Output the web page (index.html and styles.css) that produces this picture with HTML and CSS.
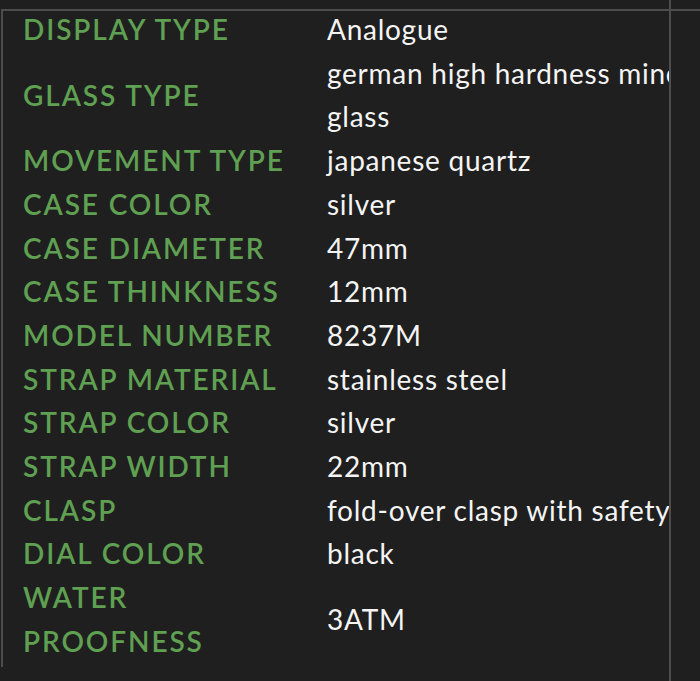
FILE: index.html
```html
<!DOCTYPE html>
<html>
<head>
<meta charset="utf-8">
<link rel="stylesheet" href="styles.css">
</head>
<body>
<div class="page">
  <div class="main">
    <div class="frame">
      <div class="specs">
        <div class="label">DISPLAY TYPE</div><div class="value">Analogue</div>
        <div class="label">GLASS TYPE</div><div class="value">german high hardness mineral glass</div>
        <div class="label">MOVEMENT TYPE</div><div class="value">japanese quartz</div>
        <div class="label">CASE COLOR</div><div class="value">silver</div>
        <div class="label">CASE DIAMETER</div><div class="value">47mm</div>
        <div class="label">CASE THINKNESS</div><div class="value">12mm</div>
        <div class="label">MODEL NUMBER</div><div class="value">8237M</div>
        <div class="label">STRAP MATERIAL</div><div class="value">stainless steel</div>
        <div class="label">STRAP COLOR</div><div class="value">silver</div>
        <div class="label">STRAP WIDTH</div><div class="value">22mm</div>
        <div class="label">CLASP</div><div class="value">fold-over clasp with safety</div>
        <div class="label">DIAL COLOR</div><div class="value">black</div>
        <div class="label label-narrow">WATER PROOFNESS</div><div class="value">3ATM</div>
      </div>
    </div>
  </div>
  <div class="divider"></div>
  <div class="side"><div class="side-line"></div></div>
</div>
</body>
</html>
```
FILE: styles.css
```css
html, body {
  margin: 0;
  padding: 0;
  background: #1f1f1f;
  height: 100%;
  overflow: hidden;
}
.page {
  display: flex;
  height: 681px;
}
.main {
  width: 669px;
  flex: none;
  overflow: hidden;
  padding-top: 9px;
  box-sizing: border-box;
}
.frame {
  margin-left: 1px;
  border-top: 2px solid #4d4d4d;
  border-left: 2px solid #4d4d4d;
  width: 760px;
  padding-bottom: 3px;
}
.specs {
  display: grid;
  grid-template-columns: 304px 400px;
  padding-left: 20px;
  margin-top: -3px;
  font-family: "Lato", sans-serif;
  font-size: 28px;
  line-height: 43.7px;
}
.label {
  color: #5fa052;
  font-weight: 600;
  letter-spacing: 1.9px;
  display: flex;
  align-items: center;
}
.label-narrow {
  width: 200px;
}
.value {
  color: #f4f4f4;
  display: flex;
  align-items: center;
  letter-spacing: 0.75px;
}
.divider {
  width: 2px;
  flex: none;
  background: #4d4d4d;
}
.side {
  flex: 1;
  padding-top: 9px;
}
.side-line {
  height: 2px;
  background: #4d4d4d;
}
```
